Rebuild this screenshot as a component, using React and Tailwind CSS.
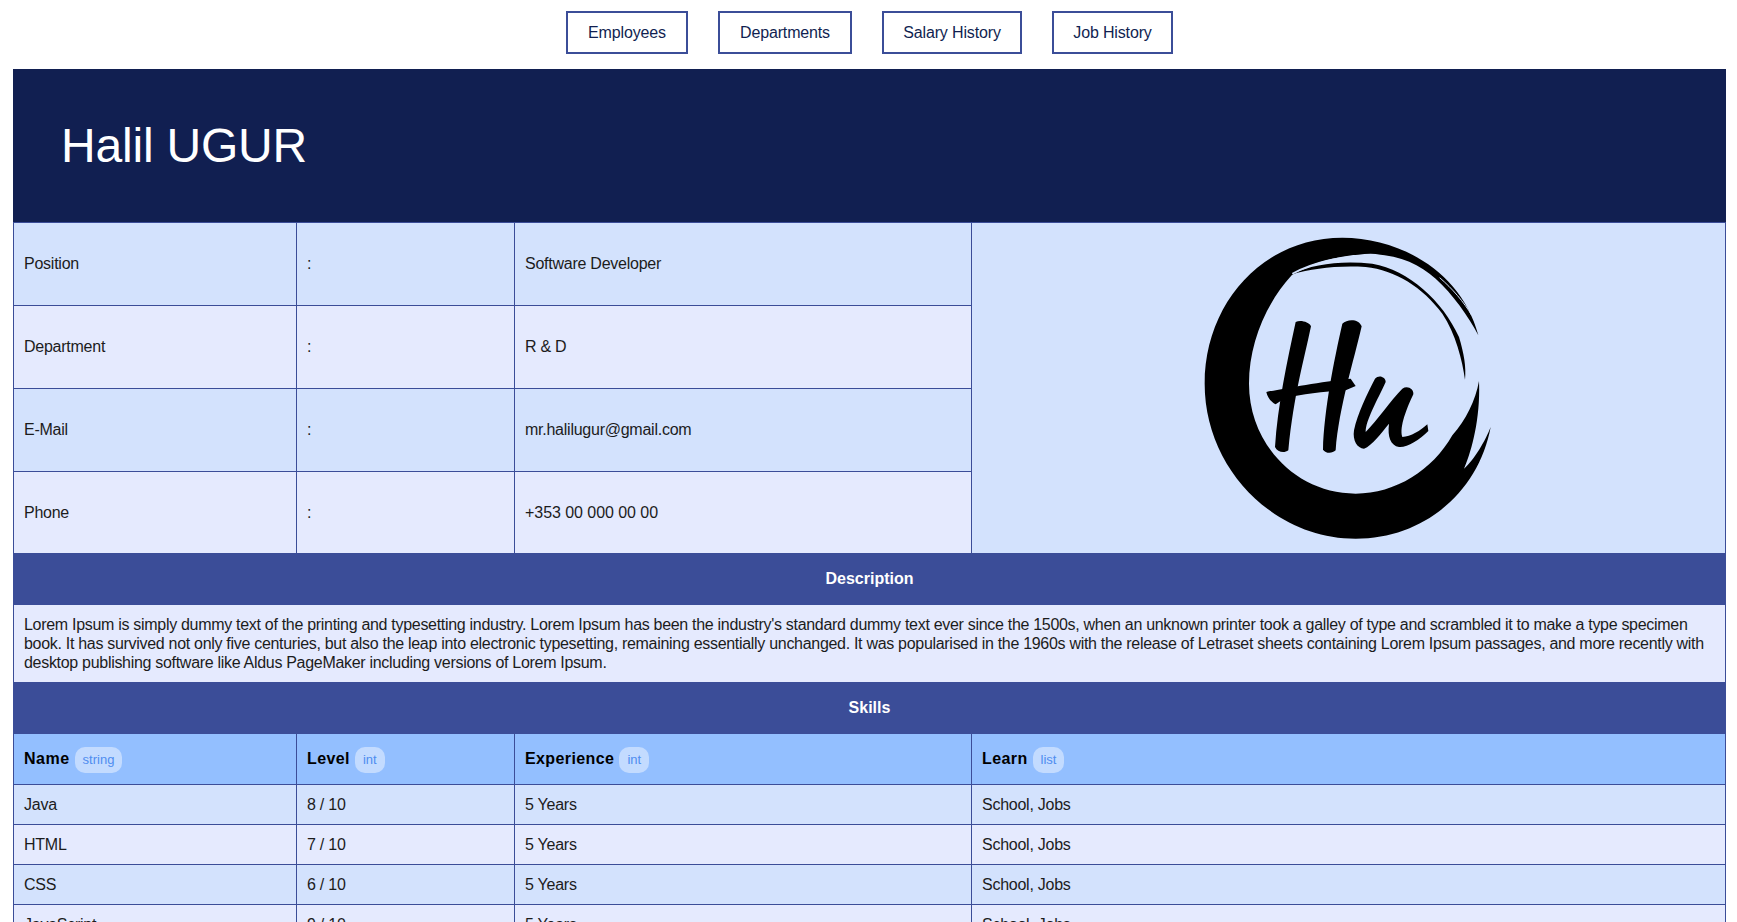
const border = "border border-[#3b4d98]";

const infoRows = [
  { label: "Position", value: "Software Developer", bg: "bg-[#d3e2fd]", h: "h-[83px]" },
  { label: "Department", value: "R & D", bg: "bg-[#e5eafe]", h: "h-[83px]" },
  { label: "E-Mail", value: "mr.halilugur@gmail.com", bg: "bg-[#d3e2fd]", h: "h-[83px]" },
  { label: "Phone", value: "+353 00 000 00 00", bg: "bg-[#e5eafe]", h: "h-[82px]" },
];

const skills = [
  { name: "Java", level: "8 / 10", bg: "bg-[#d3e2fd]" },
  { name: "HTML", level: "7 / 10", bg: "bg-[#e5eafe]" },
  { name: "CSS", level: "6 / 10", bg: "bg-[#d3e2fd]" },
  { name: "JavaScript", level: "9 / 10", bg: "bg-[#e5eafe]" },
];

function Logo() {
  return (
    <svg viewBox="0 8 1080 990" className="block mx-auto w-[360px] h-[330px]">
      <path
        d="M928 345C880 160 700 52 520 52C280 52 107 250 107 490C107 740 310 955 560 955C770 955 930 810 965 620C950 660 915 720 885 745C905 700 935 600 930 482C920 540 890 600 850 645C790 750 680 820 560 820C380 820 240 670 240 490C240 370 290 250 368 165C420 130 500 105 605 100C690 105 750 130 800 175C850 220 900 290 928 345Z"
        fill="#000"
      />
      <path
        d="M370 162C430 130 520 120 610 130C720 150 820 240 870 350C885 400 892 440 888 478C880 420 860 340 820 280C760 200 680 150 590 140C500 135 430 145 370 162Z"
        fill="#000"
      />
      <path d="M370 160C430 128 500 108 605 106" fill="none" stroke="#d3e2fd" strokeWidth="5" />
      <path d="M812 172C850 205 885 245 908 285" fill="none" stroke="#d3e2fd" strokeWidth="3" />
      <g fill="#000">
        <path d="M380 305C395 298 420 305 426 318C405 420 375 520 358 690C345 700 325 695 318 680C325 560 355 420 380 305Z" />
        <path d="M520 310C535 295 570 295 578 318C555 420 510 560 500 690C490 700 470 700 462 688C465 570 495 420 520 310Z" />
        <path d="M292 515C340 505 450 485 545 475L560 497L530 510C460 515 400 520 345 535L320 552C305 545 295 530 292 515Z" />
        <path d="M618 475C630 462 650 470 650 485C625 540 590 600 590 635C625 600 665 540 700 505C715 495 735 505 733 522C715 560 690 620 700 650C725 650 755 630 775 612L778 632C750 660 715 682 690 680C665 675 655 650 660 610C635 640 610 675 585 685C565 685 550 660 555 630C565 580 595 520 618 475Z" />
      </g>
    </svg>
  );
}

function Badge({ children }) {
  return (
    <span className="inline-block ml-[5px] px-2 rounded-[10px] bg-[#c3dbff] text-[#4f8df0] text-[13px] tracking-normal font-normal leading-[26px] align-middle">
      {children}
    </span>
  );
}

function App() {
  return (
    <div className="bg-white font-['Liberation_Sans',Arial,sans-serif] text-base text-[#1c1c1c]">
      <nav className="flex justify-center gap-[30px] pt-[11px] pb-[15px] pl-[2px] text-[#111f51] tracking-[-0.15px]">
        <a className="border-2 border-[#3b4d98] h-[43px] w-[122px] flex items-center justify-center">Employees</a>
        <a className="border-2 border-[#3b4d98] h-[43px] w-[134px] flex items-center justify-center">Departments</a>
        <a className="border-2 border-[#3b4d98] h-[43px] w-[140px] flex items-center justify-center">Salary History</a>
        <a className="border-2 border-[#3b4d98] h-[43px] w-[121px] flex items-center justify-center">Job History</a>
      </nav>
      <div className="ml-[13px] w-[1713px]">
        <h1 className="bg-[#111f51] text-white text-5xl tracking-[-0.2px] font-normal h-[153px] pl-[48px] flex items-center">Halil UGUR</h1>
        <table className="w-full table-fixed border-collapse tracking-[-0.25px]">
          <colgroup>
            <col className="w-[283px]" />
            <col className="w-[218px]" />
            <col className="w-[457px]" />
            <col />
          </colgroup>
          <tbody>
            {infoRows.map((row, i) => (
              <tr key={row.label} className={`${row.bg} ${row.h}`}>
                <td className={`${border} px-[10px]`}>{row.label}</td>
                <td className={`${border} px-[10px]`}>:</td>
                <td className={`${border} px-[10px] ${row.label === "Phone" ? "tracking-[-0.05px]" : ""}`}>{row.value}</td>
                {i === 0 && (
                  <td rowSpan={4} className={`${border} bg-[#d3e2fd] p-0`}>
                    <Logo />
                  </td>
                )}
              </tr>
            ))}
            <tr className="bg-[#3b4d98] h-[51px]">
              <th colSpan={4} className={`${border} text-white font-bold text-center tracking-normal`}>Description</th>
            </tr>
            <tr className="bg-[#e5eafe] h-[78px]">
              <td colSpan={4} className={`${border} px-[10px] leading-[19px] tracking-[-0.3px]`}>
                Lorem Ipsum is simply dummy text of the printing and typesetting industry. Lorem Ipsum has been the industry's standard dummy text ever since the 1500s, when an unknown printer took a galley of type and scrambled it to make a type specimen book. It has survived not only five centuries, but also the leap into electronic typesetting, remaining essentially unchanged. It was popularised in the 1960s with the release of Letraset sheets containing Lorem Ipsum passages, and more recently with desktop publishing software like Aldus PageMaker including versions of Lorem Ipsum.
              </td>
            </tr>
            <tr className="bg-[#3b4d98] h-[51px]">
              <th colSpan={4} className={`${border} text-white font-bold text-center tracking-normal`}>Skills</th>
            </tr>
            <tr className="bg-[#93bfff] h-[51px] text-black">
              <th className={`${border} px-[10px] pt-[2px] text-left tracking-[0.5px]`}>Name<Badge>string</Badge></th>
              <th className={`${border} px-[10px] pt-[2px] text-left tracking-[0.4px]`}>Level<Badge>int</Badge></th>
              <th className={`${border} px-[10px] pt-[2px] text-left tracking-[0.4px]`}>Experience<Badge>int</Badge></th>
              <th className={`${border} px-[10px] pt-[2px] text-left tracking-[0.4px]`}>Learn<Badge>list</Badge></th>
            </tr>
            {skills.map((skill) => (
              <tr key={skill.name} className={`${skill.bg} h-[40px]`}>
                <td className={`${border} px-[10px]`}>{skill.name}</td>
                <td className={`${border} px-[10px]`}>{skill.level}</td>
                <td className={`${border} px-[10px]`}>5 Years</td>
                <td className={`${border} px-[10px]`}>School, Jobs</td>
              </tr>
            ))}
          </tbody>
        </table>
      </div>
    </div>
  );
}

export default App;
